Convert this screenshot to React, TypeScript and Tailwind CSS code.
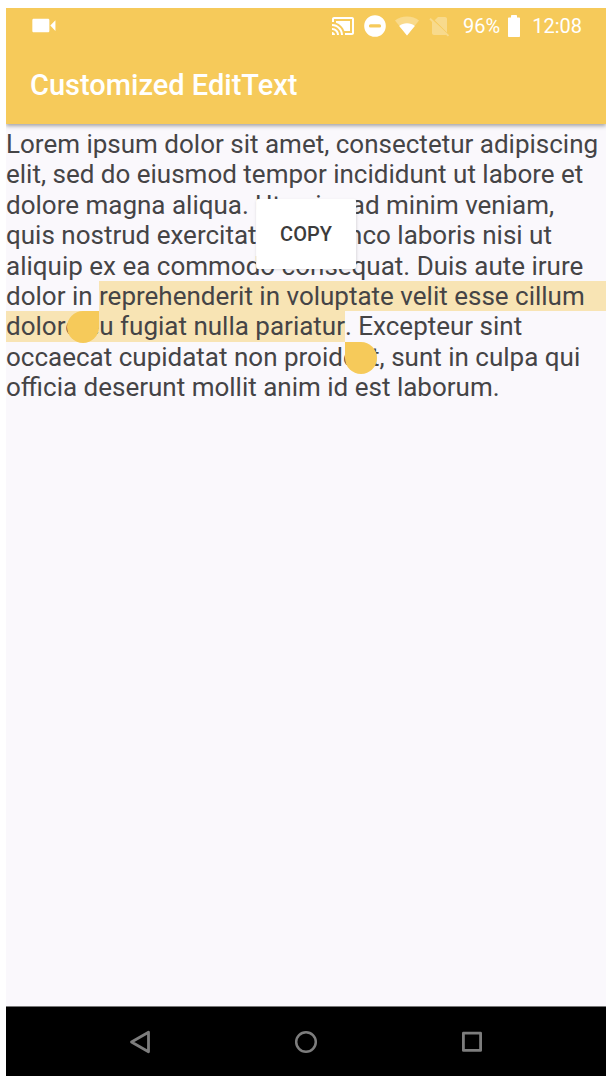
import type { ReactNode } from "react";

function StatusIcon({ className, children }: { className: string; children: ReactNode }) {
  return (
    <svg viewBox="0 0 24 24" fill="currentColor" aria-hidden="true" className={`shrink-0 ${className}`}>
      {children}
    </svg>
  );
}

function StatusBar() {
  return (
    <div className="flex h-9 items-center px-6">
      <StatusIcon className="size-7">
        <path d="M3.200 5.800h12.200c.7 0 1.200.5 1.200 1.200v9.200c0 .7-.5 1.200-1.200 1.200H3.200c-.7 0-1.200-.5-1.200-1.200V7c0-.7.5-1.200 1.200-1.200zM17.400 11.600L21.800 7v9.200z" />
      </StatusIcon>
      <div className="ml-auto flex items-center gap-2">
        <StatusIcon className="size-6">
          <path d="M1 18v3h3c0-1.660-1.340-3-3-3zm0-4v2c2.760 0 5 2.240 5 5h2c0-3.870-3.130-7-7-7zm18-7H5v1.630c3.960 1.280 7.090 4.410 8.370 8.370H19V7zM1 10v2c4.970 0 9 4.030 9 9h2c0-6.080-4.930-11-11-11zm20-7H3c-1.100 0-2 .9-2 2v3h2V5h18v14h-7v2h7c1.100 0 2-.9 2-2V5c0-1.100-.9-2-2-2z" />
        </StatusIcon>
        <StatusIcon className="size-6">
          <path
            fillRule="evenodd"
            d="M12 1.200a10.800 10.800 0 1 0 0 21.600a10.800 10.800 0 0 0 0-21.600zM7.500 10.300h9a1.500 1.500 0 0 1 0 3.200h-9a1.500 1.500 0 0 1 0-3.200z"
          />
        </StatusIcon>
        <StatusIcon className="size-6">
          <path opacity="0.3" d="M12 2.500C7.300 2.500 3.200 4 0 6.600L12 21.500 24 6.600C20.800 4 16.700 2.500 12 2.500z" />
          <path d="M12 9.200c-3 0-5.700 1-7.800 2.700L12 21.500l7.800-9.600C17.700 10.200 15 9.200 12 9.200z" />
        </StatusIcon>
        <StatusIcon className="size-6 opacity-30">
          <path d="M20 5c0-1.100-.9-2-2-2h-7L7.700 6.300 20 18.600V5zM3.700 3.900L2.300 5.300 5 8v11c0 1.100.9 2 2 2h11c.35 0 .68-.1.970-.26L20.800 22.600l1.400-1.400L3.700 3.900z" />
        </StatusIcon>
      </div>
      <span className="ml-3 text-xl">96%</span>
      <svg viewBox="0 0 12 22" fill="currentColor" aria-hidden="true" className="ml-2 h-[22px] w-3 shrink-0">
        <path d="M11 2.500H9V.8C9 .3 8.600 0 8.200 0H3.800C3.400 0 3 .3 3 .8v1.700H1c-.6 0-1 .4-1 1V21c0 .6.4 1 1 1h10c.6 0 1-.4 1-1V3.500c0-.6-.4-1-1-1z" />
      </svg>
      <span className="ml-3 text-xl">12:08</span>
    </div>
  );
}

function ActionMenu() {
  return (
    <div className="absolute left-1/2 top-[75px] z-20 -translate-x-1/2 rounded-xs bg-white shadow-sm">
      <button type="button" className="h-[70px] px-6 text-xl font-medium text-[#3c3c3c]">
        COPY
      </button>
    </div>
  );
}

function Article() {
  return (
    <div className="relative whitespace-nowrap pt-[5px] text-[26px] leading-[1.17] text-[#454446]">
      <ActionMenu />
      <div>Lorem ipsum dolor sit amet, consectetur adipiscing</div>
      <div>elit, sed do eiusmod tempor incididunt ut labore et</div>
      <div>dolore magna aliqua. Ut enim ad minim veniam,</div>
      <div>quis nostrud exercitation ullamco laboris nisi ut</div>
      <div>aliquip ex ea commodo consequat. Duis aute irure</div>
      <div className="flex">
        <span className="whitespace-pre">dolor in </span>
        <span className="relative flex-1 bg-[#f8e4b4]">
          reprehenderit in voluptate velit esse cillum
          <span className="absolute right-full top-full z-10 size-8 rounded-full rounded-tr-none bg-[#f6ca5a]" />
        </span>
      </div>
      <div className="flex">
        <span className="relative bg-[#f8e4b4]">
          dolore eu fugiat nulla pariatur
          <span className="absolute left-full top-full z-10 size-8 rounded-full rounded-tl-none bg-[#f6ca5a]" />
        </span>
        <span>. Excepteur sint</span>
      </div>
      <div>occaecat cupidatat non proident, sunt in culpa qui</div>
      <div>officia deserunt mollit anim id est laborum.</div>
    </div>
  );
}

function NavigationBar() {
  return (
    <nav className="grid h-[70px] grid-cols-3 items-center border-t border-[#777] bg-black px-[51px] text-[#7d7d7d]">
      <button type="button" aria-label="Back" className="flex justify-center">
        <svg viewBox="0 0 24 24" className="size-6" fill="none" stroke="currentColor" strokeWidth="2.800" strokeLinejoin="round">
          <path d="M20.500 2.200v19.600L3.500 12z" />
        </svg>
      </button>
      <button type="button" aria-label="Home" className="flex justify-center">
        <svg viewBox="0 0 24 24" className="size-6" fill="none" stroke="currentColor" strokeWidth="2.500">
          <circle cx="12" cy="12" r="9.800" />
        </svg>
      </button>
      <button type="button" aria-label="Recent apps" className="flex justify-center">
        <svg viewBox="0 0 24 24" className="size-6" fill="none" stroke="currentColor" strokeWidth="2.800" strokeLinejoin="round">
          <rect x="3.400" y="3.200" width="17.200" height="17.200" />
        </svg>
      </button>
    </nav>
  );
}

export default function App() {
  return (
    <div className="flex min-h-screen flex-col bg-white px-1.5 pb-0.5 pt-2 font-['Roboto',sans-serif]">
      <div className="flex flex-1 flex-col overflow-hidden">
        <header className="z-10 bg-[#f6ca5a] text-white shadow-[0_2px_4px_rgba(0,0,0,0.35)]">
          <StatusBar />
          <div className="flex h-20 items-center px-6 pt-1">
            <h1 className="text-[29px] font-medium">Customized EditText</h1>
          </div>
        </header>
        <main className="flex-1 bg-[#faf8fc]">
          <Article />
        </main>
        <NavigationBar />
      </div>
    </div>
  );
}
